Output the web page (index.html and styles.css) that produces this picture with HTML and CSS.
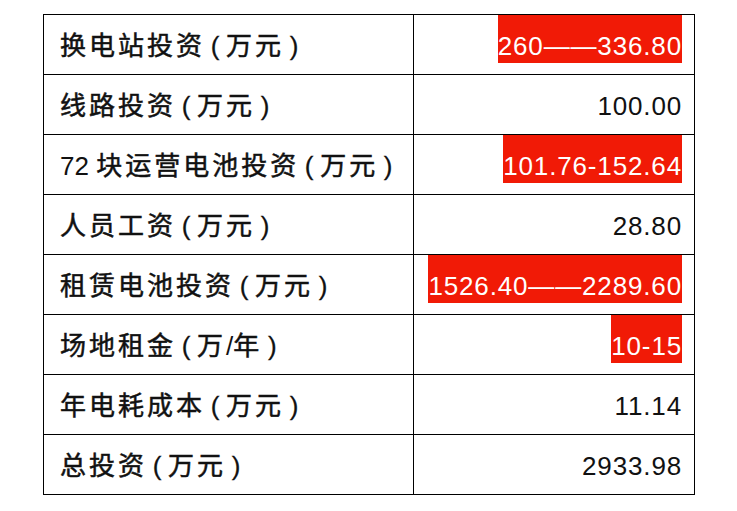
FILE: index.html
```html
<!DOCTYPE html>
<html lang="zh-CN">
<head>
<meta charset="utf-8">
<title>投资表</title>
<link rel="stylesheet" href="styles.css">
</head>
<body>
<div class="wrap">
<table class="invest">
  <tr><td class="label"><span class="txt">换电站投资<span class="par">(</span>万元<span class="par">)</span></span></td><td class="val"><span class="num hl">260——336.80</span></td></tr>
  <tr><td class="label"><span class="txt">线路投资<span class="par">(</span>万元<span class="par">)</span></span></td><td class="val"><span class="num">100.00</span></td></tr>
  <tr><td class="label"><span class="txt"><span class="lat">72 </span>块运营电池投资<span class="par">(</span>万元<span class="par">)</span></span></td><td class="val"><span class="num hl">101.76-152.64</span></td></tr>
  <tr><td class="label"><span class="txt">人员工资<span class="par">(</span>万元<span class="par">)</span></span></td><td class="val"><span class="num">28.80</span></td></tr>
  <tr><td class="label"><span class="txt">租赁电池投资<span class="par">(</span>万元<span class="par">)</span></span></td><td class="val"><span class="num hl">1526.40——2289.60</span></td></tr>
  <tr><td class="label"><span class="txt">场地租金<span class="par">(</span>万<span class="lat">/</span>年<span class="par">)</span></span></td><td class="val"><span class="num hl">10-15</span></td></tr>
  <tr><td class="label"><span class="txt">年电耗成本<span class="par">(</span>万元<span class="par">)</span></span></td><td class="val"><span class="num">11.14</span></td></tr>
  <tr><td class="label"><span class="txt">总投资<span class="par">(</span>万元<span class="par">)</span></span></td><td class="val"><span class="num">2933.98</span></td></tr>
</table>
</div>
</body>
</html>
```
FILE: styles.css
```css
html, body {
  margin: 0;
  background: #fff;
}
.wrap {
  padding: 14px 0 0 43px;
}
.invest {
  border-collapse: collapse;
  border: 1px solid #000;
  width: 652px;
  table-layout: fixed;
  color: #111;
}
.invest td {
  border: 1px solid #000;
  height: 59px;
  padding: 0;
  vertical-align: top;
  white-space: nowrap;
}
.label {
  width: 353px;
  padding-left: 16px !important;
}
.val {
  text-align: right;
  padding-right: 12px !important;
}
.txt {
  display: inline-block;
  font-family: "Liberation Sans", "Noto Sans CJK SC", sans-serif;
  font-size: 26px;
  letter-spacing: 3px;
  line-height: 30px;
  padding-top: 16px;
  -webkit-text-stroke: 0.5px #111;
}
.lat {
  letter-spacing: 0;
  -webkit-text-stroke: 0;
}
.par {
  display: inline-block;
  width: 20px;
  margin-right: 1px;
  text-align: center;
  letter-spacing: 0;
  -webkit-text-stroke: 0.3px #111;
}
.num {
  display: inline-block;
  font-family: "Liberation Sans", Arial, sans-serif;
  font-size: 26px;
  letter-spacing: 0.85px;
  line-height: 30px;
  padding-top: 16px;
  padding-bottom: 2px;
}
.hl {
  background: #f11a06;
  color: #fff;
}
```
